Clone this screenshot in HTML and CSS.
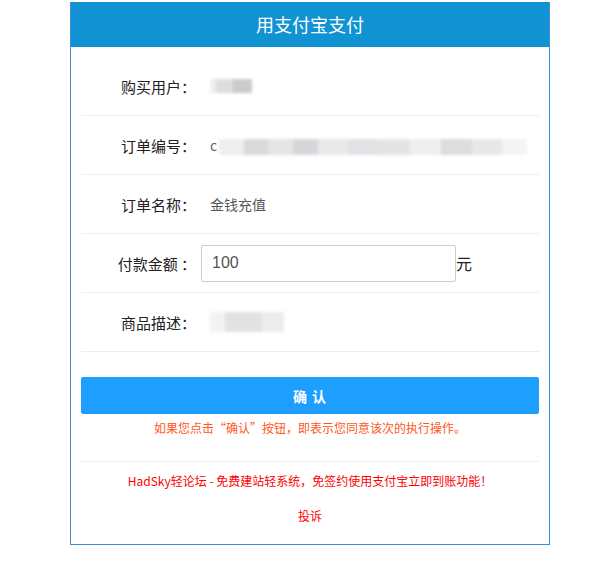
FILE: index.html
```html
<!DOCTYPE html>
<html lang="zh-CN">
<head>
	<meta charset="UTF-8">
	<title>用支付宝支付</title>
	<link rel="stylesheet" href="styles.css">
</head>
<body>
	<div class="pay-box">
		<div class="pay-head">用支付宝支付</div>
		<div class="pay-body">
			<div class="row">
				<div class="label">购买用户：</div>
				<div class="value"><span class="mask mask-user"></span></div>
			</div>
			<div class="row">
				<div class="label">订单编号：</div>
				<div class="value"><span class="lead">c</span><span class="mask mask-order"></span></div>
			</div>
			<div class="row">
				<div class="label">订单名称：</div>
				<div class="value">金钱充值</div>
			</div>
			<div class="row">
				<div class="label">付款金额 ：</div>
				<div class="value value-input"><input type="text" class="amount" value="100"><span class="unit">元</span></div>
			</div>
			<div class="row">
				<div class="label">商品描述：</div>
				<div class="value"><span class="mask mask-desc"></span></div>
			</div>

			<button class="confirm">确 认</button>
			<p class="warn">如果您点击“确认”按钮，即表示您同意该次的执行操作。</p>

			<div class="foot">
				<p class="ad">HadSky轻论坛 - 免费建站轻系统，免签约使用支付宝立即到账功能！</p>
				<p class="report">投诉</p>
			</div>
		</div>
	</div>
</body>
</html>
```

FILE: styles.css
```css
* {
	box-sizing: border-box;
}

body {
	margin: 0;
	background: #fff;
	font-family: "Microsoft YaHei", "Noto Sans CJK SC", sans-serif;
	color: #333;
}

.pay-box {
	width: 480px;
	margin: 2px 0 0 70px;
	border: 1px solid #3d8fd8;
	border-top: none;
}

.pay-head {
	height: 45px;
	line-height: 45px;
	background: #1192d3;
	color: #fff;
	font-size: 18px;
	text-align: center;
}

.pay-body {
	padding: 10px 10px 20px;
}

.row {
	display: flex;
	align-items: center;
	height: 59px;
	border-bottom: 1px solid #eee;
}

.label {
	width: 115px;
	text-align: right;
	font-size: 15px;
	color: #222;
}

.value {
	margin-left: 14px;
	font-size: 14px;
	color: #555;
	display: flex;
	align-items: center;
}

.value-input {
	margin-left: 5px;
}

.amount {
	width: 255px;
	height: 37px;
	border: 1px solid #ccc;
	border-radius: 2px;
	padding: 0 10px;
	font-size: 16px;
	color: #555;
	font-family: "Liberation Sans", Arial, sans-serif;
	outline: none;
}

.unit {
	font-size: 16px;
	color: #222;
}

.lead {
	font-size: 14px;
	color: #666;
	margin-right: 2px;
}

.mask {
	display: inline-block;
	filter: blur(1.5px);
}

.mask-user {
	width: 42px;
	height: 14px;
	background: linear-gradient(90deg, #f0eff0 0 15%, #dedcdd 15% 55%, #c9cbcc 55% 100%);
}

.mask-order {
	width: 308px;
	height: 16px;
	margin-top: 4px;
	background: linear-gradient(90deg, #eee 0 8%, #dadada 8% 16%, #e6e4e4 16% 24%, #d8d6da 24% 32%, #e9e9e9 32% 42%, #e2e3e6 42% 52%, #e4e4e4 52% 62%, #efefef 62% 72%, #dddddd 72% 82%, #e8e8e8 82% 92%, #f4f4f4 92% 100%);
}

.mask-desc {
	width: 74px;
	height: 20px;
	background: linear-gradient(90deg, #f3f3f3 0 20%, #e3e1e1 20% 70%, #ebeded 70% 100%);
}

.confirm {
	display: block;
	width: 100%;
	height: 37px;
	margin-top: 25px;
	border: none;
	border-radius: 2px;
	background: #1e9fff;
	color: #fff;
	font-size: 14px;
	font-weight: bold;
	font-family: inherit;
	letter-spacing: 1px;
}

.warn {
	margin: 5px 0 0;
	text-align: center;
	font-size: 12px;
	color: #ff5722;
}

.foot {
	margin-top: 25px;
	border-top: 1px solid #eee;
	text-align: center;
	font-size: 12px;
	color: #f00;
}

.ad {
	margin: 10px 0 0;
}

.report {
	margin: 18px 0 0;
}
```
